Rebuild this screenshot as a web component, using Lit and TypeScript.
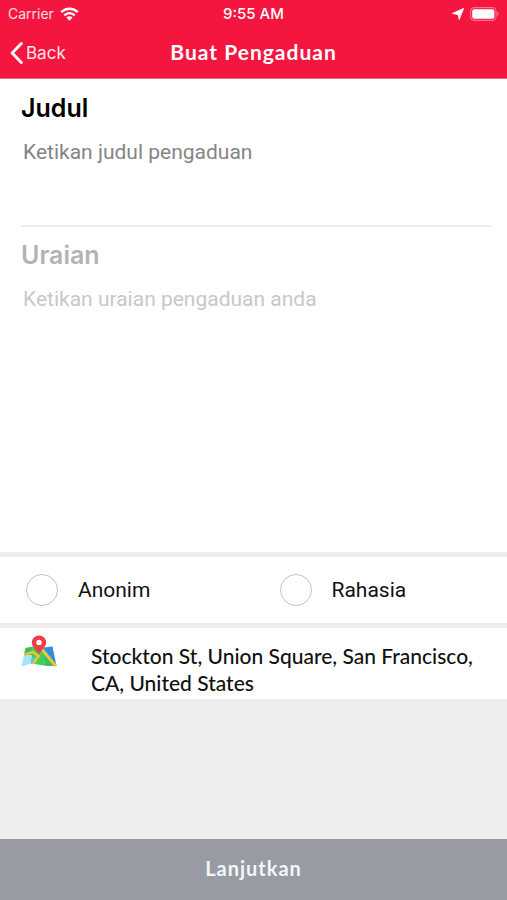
import { LitElement, html, css } from "lit";
import { customElement, property } from "lit/decorators.js";

@customElement("status-bar")
export class StatusBar extends LitElement {
  static styles = css`
    :host {
      display: grid;
      grid-template-columns: 1fr auto 1fr;
      align-items: center;
      height: 28px;
      padding: 0 8px;
      font-size: 14px;
      line-height: 20px;
      color: #fff;
    }
    .side {
      display: flex;
      align-items: center;
      gap: 6px;
    }
    .carrier {
      opacity: 0.85;
    }
    .end {
      justify-content: flex-end;
    }
    .time {
      font-size: 15px;
      font-weight: 500;
    }
    svg {
      display: block;
    }
  `;

  render() {
    return html`
      <div class="side">
        <span class="carrier">Carrier</span>
        <svg width="19" height="14" viewBox="0 0 19 14" aria-label="Wi-Fi">
          <g fill="none" stroke="#fff" stroke-width="2.4">
            <path d="M1.2 5.2C5.8 0.6 13.2 0.6 17.8 5.2" />
            <path d="M4.3 8.3C7.2 5.4 11.8 5.4 14.7 8.3" />
          </g>
          <path d="M6.4 10.6C8.1 8.9 10.9 8.9 12.6 10.6L9.5 13.7Z" fill="#fff" />
        </svg>
      </div>
      <span class="time">9:55 AM</span>
      <div class="side end">
        <svg width="12" height="12" viewBox="0 0 12 12" aria-label="Location">
          <path d="M11.6 0.4L7.2 11.4L6 6.6L0.5 5.4Z" fill="#fff" stroke="#fff" stroke-width="0.9" stroke-linejoin="round" />
        </svg>
        <svg width="29" height="14" viewBox="0 0 29 14" aria-label="Battery">
          <rect x="0.6" y="0.6" width="25.4" height="12.8" rx="3.6" fill="none" stroke="#fff" stroke-opacity="0.4" stroke-width="1.1" />
          <rect x="2.2" y="2.2" width="22.2" height="9.6" rx="2" fill="#fff" />
          <path d="M27.2 4.8C29 5.6 29 8.4 27.2 9.2Z" fill="#fff" fill-opacity="0.45" />
        </svg>
      </div>
    `;
  }
}

@customElement("nav-header")
export class NavHeader extends LitElement {
  @property() heading = "";

  static styles = css`
    :host {
      display: grid;
      grid-template-columns: 1fr auto 1fr;
      align-items: center;
      height: 50px;
      padding: 0 10px;
      border-bottom: 1px solid #f4687c;
      color: #fff;
    }
    .back {
      justify-self: start;
      display: flex;
      align-items: center;
      gap: 3px;
      padding: 0;
      border: 0;
      background: none;
      color: #ffe4e8;
      font: inherit;
      font-size: 17px;
      line-height: 24px;
      cursor: pointer;
    }
    .title {
      margin: 0;
      padding-bottom: 3px;
      font-family: Lato, sans-serif;
      font-size: 21px;
      line-height: 24px;
      font-weight: 700;
      letter-spacing: 1px;
    }
  `;

  render() {
    return html`
      <button class="back" type="button">
        <svg width="13" height="22" viewBox="0 0 13 22" aria-hidden="true">
          <path d="M11.3 1.6L2.2 11L11.3 20.4" fill="none" stroke="#fff" stroke-width="2.9" stroke-linecap="round" stroke-linejoin="round" />
        </svg>
        <span>Back</span>
      </button>
      <h1 class="title">${this.heading}</h1>
    `;
  }
}

@customElement("app-root")
export class AppRoot extends LitElement {
  static styles = css`
    :host {
      display: flex;
      flex-direction: column;
      min-height: 100vh;
      background: #eeeeee;
      font-family: Inter, sans-serif;
      color: #111;
    }
    .top {
      background: #f4163f;
    }
    .form {
      display: flex;
      flex-direction: column;
      padding: 13px 15px 0 21px;
      background: #fff;
    }
    .label {
      font-size: 25px;
      line-height: 32px;
      font-weight: 600;
      color: #000;
    }
    .label.muted {
      color: #b3b3b3;
    }
    .field {
      display: block;
      width: 100%;
      box-sizing: border-box;
      margin: 0;
      padding: 14px 2px 0;
      border: 0;
      outline: 0;
      resize: none;
      background: none;
      font-family: Roboto, sans-serif;
      font-size: 21px;
      line-height: 28px;
      color: #111;
    }
    .field::placeholder {
      color: #858585;
      opacity: 1;
    }
    .field.muted::placeholder {
      color: #c8c8c8;
    }
    .subject {
      height: 103px;
      border-bottom: 2px solid #eeeeee;
      margin-bottom: 12px;
    }
    .body {
      height: 281px;
    }
    .options {
      display: grid;
      grid-template-columns: 1fr 1fr;
      height: 66px;
      border: solid #eeeeee;
      border-width: 5px 0;
      background: #fff;
      font-family: Roboto, sans-serif;
    }
    .option {
      display: flex;
      align-items: center;
      gap: 20px;
      padding-left: 26px;
      font-size: 21px;
      line-height: 28px;
      cursor: pointer;
    }
    .tick {
      appearance: none;
      width: 32px;
      height: 32px;
      margin: 0;
      border: 1px solid #c4c4c4;
      border-radius: 50%;
      background: #fff;
    }
    .tick:checked {
      background: #f4163f;
    }
    .place {
      display: flex;
      align-items: flex-start;
      gap: 34px;
      padding: 7px 21px 3px;
      background: #fff;
    }
    .map {
      flex: none;
      display: block;
    }
    .address {
      margin: 0;
      padding-top: 7px;
      font-family: Lato, sans-serif;
      font-size: 21px;
      line-height: 27px;
      font-weight: 500;
    }
    .next {
      margin-top: auto;
      height: 61px;
      padding: 0 0 3px;
      border: 0;
      background: #989ba4;
      color: #f5f6f8;
      font-family: Lato, sans-serif;
      font-size: 20px;
      line-height: 24px;
      font-weight: 700;
      letter-spacing: 1px;
      cursor: pointer;
    }
  `;

  render() {
    return html`
      <header class="top">
        <status-bar></status-bar>
        <nav-header heading="Buat Pengaduan"></nav-header>
      </header>
      <section class="form">
        <label class="label" for="subject">Judul</label>
        <textarea id="subject" class="field subject" placeholder="Ketikan judul pengaduan"></textarea>
        <label class="label muted" for="body">Uraian</label>
        <textarea id="body" class="field body muted" placeholder="Ketikan uraian pengaduan anda"></textarea>
      </section>
      <div class="options">
        <label class="option"><input class="tick" type="checkbox" />Anonim</label>
        <label class="option"><input class="tick" type="checkbox" />Rahasia</label>
      </div>
      <section class="place">
        <svg class="map" width="36" height="33" viewBox="0 0 36 33" aria-label="Map">
          <path d="M4.5 13L12 11.5L10 28.5L0.5 31.5Z" fill="#a5e4fa" />
          <path d="M4.5 13L12 11.5L11 20L3 20Z" fill="#3fbf5c" />
          <path d="M12 11.5L24 12.5L26 31L10 28.5Z" fill="#43cf54" />
          <path d="M10.8 22L17 24L13.5 29L10 28.5Z" fill="#52c3ec" />
          <path d="M23 12.5L31.5 11.5L35.5 31L25.5 31Z" fill="#2f8fdc" />
          <path d="M25 19L35.5 31L25.5 31Z" fill="#46b95a" />
          <path d="M3.2 20L11.5 17L17.5 21L11.8 29" fill="none" stroke="#e8c53a" stroke-width="2.6" />
          <path d="M19 12L34.6 31" fill="none" stroke="#f2c537" stroke-width="3" />
          <path d="M18 19C14.5 14 10.8 11.7 10.8 7.6A7.2 7.2 0 0 1 25.2 7.6C25.2 11.7 21.5 14 18 19Z" fill="#ee3f48" />
          <circle cx="18" cy="7.4" r="2.7" fill="#fff" />
        </svg>
        <p class="address">Stockton St, Union Square, San Francisco, CA, United States</p>
      </section>
      <button class="next" type="button">Lanjutkan</button>
    `;
  }
}
